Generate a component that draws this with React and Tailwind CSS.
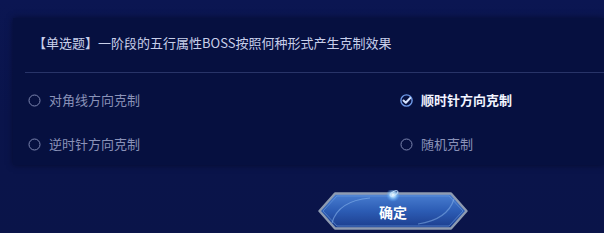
import React from "react";

const options = [
  { label: "对角线方向克制", checked: false },
  { label: "顺时针方向克制", checked: true },
  { label: "逆时针方向克制", checked: false },
  { label: "随机克制", checked: false },
];

function Radio({ checked }) {
  if (checked) {
    return (
      <svg width="13" height="13" viewBox="0 0 13 13" className="shrink-0">
        <circle cx="6.5" cy="6.5" r="5.6" fill="none" stroke="#6f9ae8" strokeWidth="1.4" />
        <path d="M3.5 6.5 L5.8 8.8 L10.2 4" fill="none" stroke="#d6e4ff" strokeWidth="2" strokeLinecap="round" strokeLinejoin="round" />
      </svg>
    );
  }
  return (
    <svg width="13" height="13" viewBox="0 0 13 13" className="shrink-0">
      <circle cx="6.5" cy="6.5" r="5.5" fill="none" stroke="#7d86b0" strokeWidth="1" />
    </svg>
  );
}

function ConfirmButton() {
  return (
    <div className="relative w-[150px] h-[43px]">
      <svg width="150" height="43" viewBox="0 0 150 43" className="absolute inset-0">
        <defs>
          <linearGradient id="btnFill" x1="0" y1="0" x2="0" y2="1">
            <stop offset="0" stopColor="#4a7fd2" />
            <stop offset="0.5" stopColor="#2c5cb4" />
            <stop offset="1" stopColor="#1c3c8c" />
          </linearGradient>
          <radialGradient id="spark" cx="0.5" cy="0.5" r="0.5">
            <stop offset="0" stopColor="#ffffff" />
            <stop offset="0.4" stopColor="#a9dcff" stopOpacity="0.8" />
            <stop offset="1" stopColor="#4aa0ff" stopOpacity="0" />
          </radialGradient>
        </defs>
        <path d="M1.5 21 L17 3.5 L133 3.5 L148.5 21 L133 38.5 L17 38.5 Z" fill="url(#btnFill)" stroke="#8e9bb1" strokeWidth="2.4" strokeLinejoin="round" />
        <path d="M5 21 L19 6 L131 6 L145 21 L131 36 L19 36 Z" fill="none" stroke="#6d9de0" strokeWidth="1" opacity="0.6" />
        <path d="M14 33 C 18 18, 30 10, 52 8" fill="none" stroke="#8dbaf0" strokeWidth="1.2" opacity="0.55" />
        <path d="M136 9 C 132 22, 120 31, 100 34" fill="none" stroke="#8dbaf0" strokeWidth="1.2" opacity="0.5" />
        <circle cx="75" cy="5" r="7" fill="url(#spark)" />
        <ellipse cx="76" cy="3.5" rx="4.5" ry="2" fill="none" stroke="#cfe8ff" strokeWidth="0.8" transform="rotate(-30 76 3.5)" />
      </svg>
      <span className="absolute inset-0 flex items-center justify-center pt-[1px] text-[14px] font-bold text-white">
        确定
      </span>
    </div>
  );
}

export default function App() {
  return (
    <div
      className="w-[604px] h-[233px] overflow-hidden bg-gradient-to-b from-[#0b1652] via-[#0a144b] to-[#0a1449]"
      style={{ fontFamily: '"Noto Sans CJK SC", "Noto Sans", sans-serif' }}
    >
      {/* question panel */}
      <div className="ml-[13px] mt-[18px] h-[147px] bg-[#061040] shadow-[0_0_6px_rgba(2,6,30,0.6)]">
        <div className="pl-[20px] pt-[15px] h-[54px] text-[13px] leading-[20px] text-[#c8cfea]">
          【单选题】一阶段的五行属性BOSS按照何种形式产生克制效果
        </div>
        <div className="ml-[12px] h-px bg-[#283468]" />
        <div className="grid grid-cols-[372px_1fr] pl-[15px] pt-[17px] gap-y-[24px]">
          {options.map((o) => (
            <div key={o.label} className="flex items-center gap-[8px] h-[20px]">
              <Radio checked={o.checked} />
              <span
                className={
                  o.checked
                    ? "text-[13px] font-bold text-[#f2f4ff]"
                    : "text-[13px] text-[#8a92b8]"
                }
              >
                {o.label}
              </span>
            </div>
          ))}
        </div>
      </div>

      {/* submit */}
      <div className="ml-[318px] mt-[25px]">
        <ConfirmButton />
      </div>
    </div>
  );
}
